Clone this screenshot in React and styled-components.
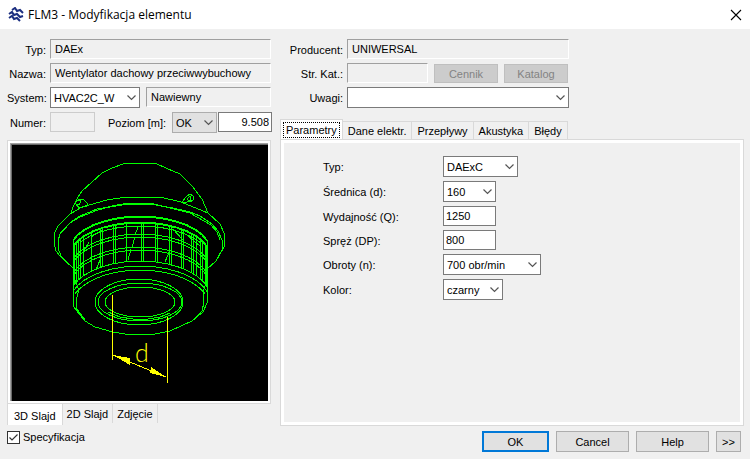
// Libraries
import React from "react";
import styled, { createGlobalStyle, ThemeProvider } from "styled-components";

const theme = {
  color: {
    face: "#f0f0f0",
    white: "#ffffff",
    edge: "#7a7a7a",
    shadow: "#a0a0a0",
    line: "#d9d9d9",
    button: "#e1e1e1",
    buttonEdge: "#adadad",
    accent: "#0078d7",
  },
};

const GlobalStyle = createGlobalStyle`
  * {
    box-sizing: border-box;
  }

  body {
    margin: 0;
    background: #f0f0f0;
  }

  body, button, input, select {
    font-family: "Liberation Sans", Arial, sans-serif;
    font-size: 11px;
    line-height: 14px;
    color: #000000;
  }
`;

// Window
const Dialog = styled.div`
  display: flex;
  flex-direction: column;
  min-height: 100vh;
  background: ${(props) => props.theme.color.face};
`;
const TitleBar = styled.header`
  display: flex;
  align-items: center;
  gap: 4px;
  height: 29px;
  padding: 0 8px;
  background: ${(props) => props.theme.color.white};
`;
const Title = styled.h1`
  flex: 1;
  margin: 0;
  font-family: "Open Sans", "Noto Sans", sans-serif;
  font-size: 12px;
  font-weight: 400;
  line-height: 16px;
`;
const CloseButton = styled.button`
  display: flex;
  padding: 0;
  border: none;
  background: none;
`;
const Content = styled.main`
  flex: 1;
  display: grid;
  grid-template-columns: 264px minmax(0, 1fr);
  gap: 9px;
  padding: 10px 6px 0 7px;
`;
const Column = styled.section`
  display: flex;
  flex-direction: column;
`;
const Footer = styled.footer`
  display: flex;
  align-items: flex-start;
  justify-content: space-between;
  padding: 4px 9px 7px 7px;
`;

// Form parts
const Fields = styled.div`
  display: grid;
  grid-template-columns: ${(props) => props.$labels} minmax(0, 1fr);
  column-gap: 4px;
  row-gap: 4px;
  max-width: ${(props) => props.$max || "none"};
`;
const Label = styled.label`
  padding-top: 4px;
  text-align: ${(props) => props.$align || "right"};
  white-space: nowrap;
`;
const LevelLabel = styled(Label)`
  width: 70px;
`;
const Group = styled.div`
  display: flex;
  gap: ${(props) => props.$gap || "6px"};
`;
const ReadOnly = styled.input`
  width: ${(props) => props.$width || "100%"};
  min-width: 0;
  height: 20px;
  padding: 0 4px;
  border: 1px solid;
  border-color: ${({ theme: { color } }) =>
    `${color.shadow} ${color.white} ${color.white} ${color.shadow}`};
  border-radius: 0;
  background: ${(props) => props.theme.color.face};
`;
const DisabledBox = styled.input`
  width: 45px;
  height: 20px;
  border: 1px solid #cccccc;
  background: ${(props) => props.theme.color.face};
`;
const TextBox = styled.input`
  width: ${(props) => props.$width};
  height: 20px;
  padding: 0 2px;
  border: 1px solid ${(props) => props.theme.color.edge};
  background: ${(props) => props.theme.color.white};
  text-align: ${(props) => props.$align || "left"};
`;
const ComboFrame = styled.span`
  position: relative;
  display: block;
  width: ${(props) => props.$width};
  height: 21px;
`;
const ComboSelect = styled.select`
  appearance: none;
  display: block;
  width: 100%;
  height: 100%;
  padding: 0 18px 0 3px;
  border: 1px solid
    ${(props) => (props.$gray ? props.theme.color.buttonEdge : props.theme.color.edge)};
  border-radius: 0;
  background: ${(props) => (props.$gray ? props.theme.color.button : props.theme.color.white)};
`;
const ComboArrow = styled.svg`
  position: absolute;
  top: 8px;
  right: 4px;
  pointer-events: none;
`;
const Button = styled.button`
  width: ${(props) => props.$width};
  height: 21px;
  padding: 0;
  border: ${(props) =>
    props.$primary
      ? `2px solid ${props.theme.color.accent}`
      : `1px solid ${props.theme.color.buttonEdge}`};
  background: ${(props) => props.theme.color.button};
`;
const CatalogButton = styled.button`
  width: 64px;
  height: 19px;
  margin-top: 1px;
  padding: 0;
  border: 1px solid #bfbfbf;
  background: #cccccc;
  color: #838383;
`;
const Buttons = styled.div`
  display: flex;
  gap: 7px;
  padding-top: 1px;
`;

// Tabs
const TabRow = styled.div`
  display: flex;
  align-items: flex-end;
  height: 20px;
  margin-top: 11px;
`;
const Tab = styled.button`
  height: ${(props) => (props.$active ? "21px" : "18px")};
  margin-bottom: ${(props) => (props.$active ? "-1px" : "0")};
  padding: ${(props) => (props.$active ? "0 2px" : "1px 5px 0")};
  border: 1px solid ${(props) => props.theme.color.line};
  border-width: ${(props) => (props.$active ? "1px 1px 0" : "1px 1px 0 0")};
  background: ${(props) => (props.$active ? props.theme.color.white : props.theme.color.face)};
  white-space: nowrap;
`;
const TabFocus = styled.span`
  display: block;
  padding: 0 2px;
  border: 1px dotted #000000;
`;
const TabPanel = styled.div`
  flex: 1;
  padding: 12px 0 0 39px;
  border: 1px solid ${(props) => props.theme.color.line};
  box-shadow: inset 0 0 0 3px ${(props) => props.theme.color.white};
`;
const Parameters = styled.div`
  display: grid;
  grid-template-columns: 120px minmax(0, 1fr);
  row-gap: 4px;
  padding: 4px 3px;
`;
const BottomTabRow = styled.div`
  display: flex;
  align-items: flex-start;
  height: 21px;
`;
const BottomTab = styled.button`
  height: ${(props) => (props.$active ? "21px" : "19px")};
  padding: ${(props) => (props.$active ? "2px 6px 0" : "1px 4px 0")};
  border: 1px solid ${(props) => props.theme.color.line};
  border-width: ${(props) => (props.$active ? "0 1px" : "0 1px 0 0")};
  background: ${(props) => (props.$active ? props.theme.color.white : props.theme.color.face)};
  white-space: nowrap;
`;

// Slide preview
const Preview = styled.div`
  margin-top: 7px;
  padding: 2px;
  border: 1px solid ${(props) => props.theme.color.line};
  background: ${(props) => props.theme.color.white};
`;
const Slide = styled.div`
  border: 1px solid ${(props) => props.theme.color.shadow};
  border-width: 1px 0 0 1px;

  svg {
    display: block;
    width: 100%;
    border: 1px solid #696969;
    border-width: 1px 0 0 1px;
    background: #000000;
  }
`;
const CheckLabel = styled.label`
  display: flex;
  align-items: center;
  gap: 3px;
`;
const CheckBox = styled.input`
  appearance: none;
  width: 13px;
  height: 13px;
  margin: 0;
  border: 1px solid #333333;
  background: #ffffff
    url("data:image/svg+xml,%3Csvg xmlns='http://www.w3.org/2000/svg' viewBox='0 0 11 11'%3E%3Cpath d='M1.5 5.5L4 8L9.5 2.5' fill='none' stroke='%23333' stroke-width='1.2'/%3E%3C/svg%3E");
`;

const Combo = ({ id, value, width, gray }) => (
  <ComboFrame $width={width}>
    <ComboSelect id={id} $gray={gray} defaultValue={value}>
      <option>{value}</option>
    </ComboSelect>
    <ComboArrow width="9" height="6" viewBox="0 0 9 6">
      <path d="M0.5 0.5L4.5 4.5L8.5 0.5" fill="none" stroke="#555555" strokeWidth="1.2" />
    </ComboArrow>
  </ComboFrame>
);

// Wireframe of the roof fan
const CENTER = 140;
const RADIUS = 70;

const arcY = (x, top, drop) => {
  const t = (x - CENTER) / RADIUS;
  return top + drop * (1 - Math.sqrt(1 - t * t));
};

// top: height in the middle, reach: how far the arc runs to each side
const arcPoints = (top, drop, reach) => {
  const points = [];
  for (let i = 0; i <= 16; i++) {
    const x = CENTER - reach * Math.cos((Math.PI * i) / 16);
    points.push(`${x.toFixed(1)},${arcY(x, top, drop).toFixed(1)}`);
  }
  return points.join(" ");
};

const rings = [
  [216, 34, 67], [217, 34, 67], [222, 34, 67], [223, 34, 66],
  [226, 34, 60], [234, 36, 67], [237, 36, 67], [247, 37, 67],
  [250, 37, 67], [261, 36, 67], [266, 36, 67], [270, 38, 65],
];
const bars = [
  74, 76, 78, 80, 83, 91, 100, 102, 113, 115, 126, 141, 143, 155, 157,
  169, 171, 181, 183, 191, 193, 196, 200, 202, 205, 206,
];

const FanDrawing = () => (
  <svg viewBox="12 145 256 256" shapeRendering="crispEdges" role="img" aria-label="3D Slajd">
    <g fill="none" stroke="#00ff00" strokeWidth="1">
      <polyline points="71,213 73,207 78,197 82,191 102,173 112,168 126,163 155,163 168,169 180,174 193,187 202,199 208,213" />
      <polyline points="73,268 60,256 56,251 54,242 55,232 58,226 70,214 82,207 107,200 126,197 160,197 181,202 208,213 220,224 225,235 224,247 216,261 207,269" />
      <polyline points="66,262 61,256 58,248 58,239 61,232 71,222 80,216 97,209 110,207 128,204 150,204 173,208 190,212 200,216 212,224 218,231 222,240 222,250 217,259" />
      <polyline points="58,242 60,234 70,223 80,217 98,210 112,206 128,203 150,203 174,209 190,213 211,225 217,232 220,240" />
      <polyline points="75,202 80,199 84,200 88,204 87,206 79,208 76,204 79,205 81,201 77,200" />
      <polyline points="182,202 186,197 190,194 193,196 193,200 190,202 187,199 190,196 191,200 187,202 182,202" />
      {rings.map(([top, drop, reach]) => (
        <polyline key={top} points={arcPoints(top, drop, reach)} />
      ))}
      {bars.map((x) => (
        <line key={x} x1={x} x2={x} y1={arcY(x, 223, 34)} y2={arcY(x, 261, 36)} />
      ))}
      <path d="M138 227L135 235M135 237L132 247M131 249L128 260M170 250L165 262M89 242L84 251M100 260L96 270M102 230L91 237M173 229L183 240M187 235L200 246" />
      <polyline points="73,240 73,306 80,315 85,321 95,327 113,332 125,334 155,334 170,331 192,321 203,312 207,303 207,240" />
      <polyline points="74,250 74,278 79,290 76,300 76,308 85,320" />
      <polyline points="206,250 206,284 203,291 204,302 202,311 192,321" />
      <ellipse cx="139" cy="302" rx="44" ry="23" />
      <ellipse cx="140" cy="302" rx="42" ry="19" />
      <ellipse cx="140" cy="302" rx="35" ry="15" />
      <polyline points="108,312 120,317 133,319 148,319 160,317 170,313" />
    </g>
    <g stroke="#ffff00" fill="#ffff00">
      <path d="M112.5 295V360M167.5 317V383M113 355L166 377" fill="none" />
      <polygon points="113,355 130,358 130,365" stroke="none" />
      <polygon points="166,377 151,367 150,373" stroke="none" />
    </g>
    <text x="135" y="362" fill="#ffff00" fontFamily="Lato, sans-serif" fontWeight="300" fontSize="25">
      d
    </text>
  </svg>
);

// Main component
const App = () => (
  <ThemeProvider theme={theme}>
    <GlobalStyle />
    <Dialog>
      <TitleBar>
        <svg width="16" height="16" viewBox="0 0 16 16">
          <path
            d="M4 3L7 1L9 4L12 3L15 6M1 7L4 5L6 8L9 7L12 10L15 9M1 11L4 9L6 12L9 11L12 14"
            fill="none"
            stroke="#1c2f80"
            strokeWidth="2"
          />
        </svg>
        <Title>FLM3 - Modyfikacja elementu</Title>
        <CloseButton aria-label="Close">
          <svg width="12" height="12" viewBox="0 0 12 12">
            <path d="M1 1L11 11M11 1L1 11" stroke="#000000" strokeWidth="1.1" />
          </svg>
        </CloseButton>
      </TitleBar>

      <Content>
        <Column>
          <Fields $labels="39px">
            <Label htmlFor="type">Typ:</Label>
            <ReadOnly id="type" readOnly value="DAEx" />
            <Label htmlFor="name">Nazwa:</Label>
            <ReadOnly id="name" readOnly value="Wentylator dachowy przeciwwybuchowy" />
            <Label htmlFor="system">System:</Label>
            <Group>
              <Combo id="system" value="HVAC2C_W" width="90px" />
              <ReadOnly aria-label="System" $width="125px" readOnly value="Nawiewny" />
            </Group>
            <Label htmlFor="number">Numer:</Label>
            <Group $gap="1px">
              <DisabledBox id="number" disabled />
              <Group>
                <LevelLabel htmlFor="level">Poziom [m]:</LevelLabel>
                <Combo id="level" value="OK" width="45px" gray />
              </Group>
              <TextBox aria-label="Poziom [m]" $width="54px" $align="right" defaultValue="9.508" />
            </Group>
          </Fields>
          <Preview>
            <Slide>
              <FanDrawing />
            </Slide>
          </Preview>
          <BottomTabRow>
            <BottomTab $active>3D Slajd</BottomTab>
            <BottomTab>2D Slajd</BottomTab>
            <BottomTab>Zdjęcie</BottomTab>
          </BottomTabRow>
        </Column>

        <Column>
          <Fields $labels="63px" $max="289px">
            <Label htmlFor="producer">Producent:</Label>
            <ReadOnly id="producer" readOnly value="UNIWERSAL" />
            <Label htmlFor="page">Str. Kat.:</Label>
            <Group>
              <ReadOnly id="page" $width="81px" readOnly value="" />
              <CatalogButton disabled>Cennik</CatalogButton>
              <CatalogButton disabled>Katalog</CatalogButton>
            </Group>
            <Label htmlFor="notes">Uwagi:</Label>
            <Combo id="notes" value="" width="100%" />
          </Fields>
          <TabRow>
            <Tab $active>
              <TabFocus>Parametry</TabFocus>
            </Tab>
            <Tab>Dane elektr.</Tab>
            <Tab>Przepływy</Tab>
            <Tab>Akustyka</Tab>
            <Tab>Błędy</Tab>
          </TabRow>
          <TabPanel>
            <Parameters>
              <Label htmlFor="kind" $align="left">Typ:</Label>
              <Combo id="kind" value="DAExC" width="75px" />
              <Label htmlFor="diameter" $align="left">Średnica (d):</Label>
              <Combo id="diameter" value="160" width="53px" />
              <Label htmlFor="flow" $align="left">Wydajność (Q):</Label>
              <TextBox id="flow" $width="53px" defaultValue="1250" />
              <Label htmlFor="pressure" $align="left">Spręż (DP):</Label>
              <TextBox id="pressure" $width="53px" defaultValue="800" />
              <Label htmlFor="speed" $align="left">Obroty (n):</Label>
              <Combo id="speed" value="700 obr/min" width="98px" />
              <Label htmlFor="color" $align="left">Kolor:</Label>
              <Combo id="color" value="czarny" width="60px" />
            </Parameters>
          </TabPanel>
        </Column>
      </Content>

      <Footer>
        <CheckLabel>
          <CheckBox type="checkbox" defaultChecked />
          Specyfikacja
        </CheckLabel>
        <Buttons>
          <Button $width="67px" $primary>OK</Button>
          <Button $width="73px">Cancel</Button>
          <Button $width="73px">Help</Button>
          <Button $width="25px">&gt;&gt;</Button>
        </Buttons>
      </Footer>
    </Dialog>
  </ThemeProvider>
);

export default App;
